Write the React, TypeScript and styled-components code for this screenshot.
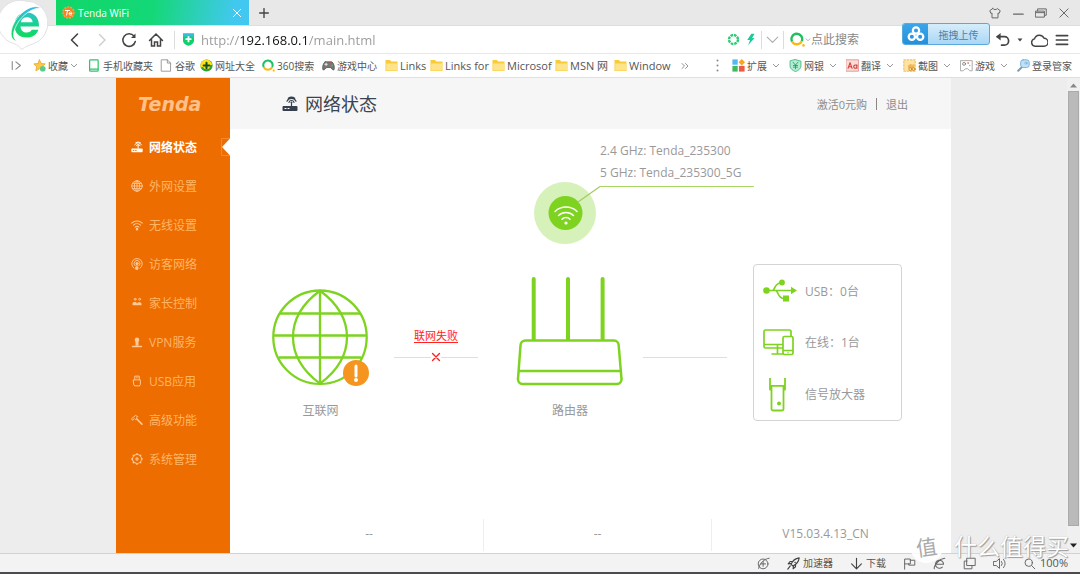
import React from "react";
import styled, { createGlobalStyle } from "styled-components";

const GREEN = "#7ed321";

const GlobalStyle = createGlobalStyle`
  *, *::before, *::after { box-sizing: border-box; }
  body {
    margin: 0;
    font-family: "Open Sans", "Noto Sans CJK SC", sans-serif;
    font-size: 12px;
    color: #999;
    background: #ededed;
  }
  button, input { font-family: inherit; }
  button { margin: 0; padding: 0; border: 0; background: none; color: inherit; cursor: pointer; }
  a { color: inherit; text-decoration: none; }
  ul { list-style: none; margin: 0; padding: 0; }
  svg { display: block; flex: none; }
`;

const Browser = styled.div`
  position: relative;
  min-height: 100vh;
  display: flex;
  flex-direction: column;
  border-bottom: 2px solid #4a4a50;
`;

/* ---------- tab strip ---------- */

const TabStrip = styled.header`
  display: flex;
  align-items: center;
  height: 26px;
  padding-left: 56px;
  background: #e8e8e8;
  border-bottom: 1px solid #dedede;
`;

const Tab = styled.div`
  display: flex;
  align-items: center;
  gap: 3px;
  width: 193px;
  height: 25px;
  padding: 0 7px 0 6px;
  color: #fff;
  background: linear-gradient(100deg, #10d668 0%, #14d877 50%, #42c8f0 92%);
`;

const TabTitle = styled.span`
  flex: 1;
  font-size: 10px;
`;

const NewTab = styled.button`
  display: grid;
  place-items: center;
  width: 30px;
  height: 25px;
`;

const WindowControls = styled.div`
  display: flex;
  align-items: center;
  gap: 11px;
  margin-left: auto;
  padding-right: 10px;
`;

const BrowserBadge = styled.div`
  position: absolute;
  left: 0;
  top: 0;
`;

/* ---------- address row ---------- */

const AddressRow = styled.div`
  display: flex;
  align-items: center;
  height: 28px;
  padding-left: 61px;
  background: #fff;
  border-bottom: 1px solid #e8e8e8;
`;

const NavGroup = styled.div`
  display: flex;
  padding-right: 5px;
`;

const NavButton = styled.button`
  display: grid;
  place-items: center;
  width: 27px;
  height: 26px;
`;

const Divider = styled.span`
  width: 1px;
  height: 18px;
  background: #dcdcdc;
`;

const AddressField = styled.label`
  display: flex;
  align-items: center;
  gap: 7px;
  flex: 1;
  padding-left: 8px;
`;

const AddressInput = styled.input`
  flex: 1;
  min-width: 0;
  height: 24px;
  padding: 0;
  border: 0;
  outline: 0;
  font-size: 13px;
  color: transparent;
  background: linear-gradient(90deg, #999 0 38px, #111 38px 107px, #999 107px);
  -webkit-background-clip: text;
  background-clip: text;
`;

const AddressTools = styled.div`
  display: flex;
  align-items: center;
  gap: 4px;
`;

const SearchField = styled.label`
  display: flex;
  align-items: center;
  gap: 0;
  width: 207px;
  padding-left: 2px;
`;

const SearchInput = styled.input`
  flex: 1;
  min-width: 0;
  padding: 0;
  border: 0;
  outline: 0;
  font-size: 12px;
  background: transparent;
  &::placeholder { color: #888; opacity: 1; }
`;

const UploadButton = styled.button`
  position: absolute;
  top: 23px;
  right: 90px;
  display: flex;
  align-items: center;
  width: 88px;
  height: 22px;
  border: 1px solid #5aa9dc;
  border-radius: 3px;
  overflow: hidden;
  font-size: 10px;
  color: #4c7fa8;
  background: linear-gradient(#d6edfb, #a9d7f5);
  span { flex: 1; }
`;

const UploadIcon = styled.i`
  display: grid;
  place-items: center;
  width: 25px;
  height: 20px;
  background: linear-gradient(#3aa5ea, #2490dc);
`;

const ToolbarEnd = styled.div`
  display: flex;
  align-items: center;
  gap: 7px;
  padding-right: 11px;
`;

/* ---------- bookmarks ---------- */

const BookmarkRow = styled.nav`
  display: flex;
  align-items: center;
  height: 24px;
  padding-left: 9px;
  color: #555;
  background: #fff;
  border-bottom: 1px solid #dfdfdf;
`;

const BookmarkList = styled.ul`
  display: flex;
  flex: 1;
  min-width: 0;
  padding-left: 11px;
`;

const BookmarkItem = styled.li<{ $width: number }>`
  flex: 0 0 ${(p) => p.$width}px;
`;

const Bookmark = styled.a<{ $latin?: boolean }>`
  display: flex;
  align-items: center;
  gap: 2px;
  height: 22px;
  font-size: ${(p) => (p.$latin ? 11 : 10)}px;
  line-height: 16px;
  white-space: nowrap;
`;

const ExtensionList = styled.ul`
  display: flex;
  padding: 0 6px 0 13px;
`;

const Extension = styled.button`
  display: flex;
  align-items: center;
  gap: 2px;
  min-width: 57px;
  height: 22px;
  font-size: 10px;
  color: #555;
  white-space: nowrap;
  svg:last-child:not(:first-child) { margin-left: 3px; }
`;

/* ---------- router page ---------- */

const Viewport = styled.div`
  display: flex;
  flex: 1;
  background: #ededed;
`;

const Page = styled.div`
  display: flex;
  flex: 1;
  max-width: 835px;
  margin: 0 auto;
`;

const Sidebar = styled.aside`
  width: 114px;
  flex: none;
  background: #ed6d00;
`;

const Brand = styled.div`
  height: 49px;
  padding: 14px 0 0 22px;
  font: italic 700 19px/25px "DejaVu Sans", sans-serif;
  color: #ffc08a;
`;

const MenuLink = styled.a<{ $active?: boolean }>`
  display: flex;
  align-items: center;
  gap: 6px;
  height: 39px;
  padding-left: 15px;
  font-size: 12px;
  font-weight: ${(p) => (p.$active ? 700 : 400)};
  color: ${(p) => (p.$active ? "#fff" : "#ffb566")};
  span { flex: 1; }
`;

const Main = styled.main`
  display: flex;
  flex: 1;
  flex-direction: column;
  min-width: 0;
  background: #fff;
`;

const PageHeader = styled.div`
  display: flex;
  align-items: center;
  justify-content: space-between;
  height: 51px;
  padding: 0 43px 0 52px;
  background: #f6f6f6;
`;

const PageTitle = styled.h1`
  display: flex;
  align-items: center;
  gap: 7px;
  margin: 0;
  font-size: 18px;
  line-height: 26px;
  font-weight: 400;
  color: #3a4450;
`;

const AccountLinks = styled.div`
  display: flex;
  align-items: center;
  gap: 9px;
  font-size: 11px;
  color: #8c8c8c;
`;

const AccountDivider = styled.span`
  width: 1px;
  height: 12px;
  background: #888;
`;

const WifiSummary = styled.section`
  display: flex;
  align-items: flex-start;
  padding: 11px 0 0 304px;
`;

const WifiDrawing = styled.svg`
  margin-top: 42px;
`;

const WifiNames = styled.div`
  width: 154px;
  padding-bottom: 2px;
  border-bottom: 1px solid #a6d763;
  line-height: 22px;
  white-space: nowrap;
`;

const Topology = styled.section`
  display: flex;
  align-items: flex-end;
  padding: 20px 49px 0 41px;
`;

const Node = styled.figure`
  display: flex;
  flex-direction: column;
  align-items: center;
  gap: 14px;
  margin: 0;
  figcaption { line-height: 20px; }
`;

const Connection = styled.div<{ $before: number; $after: number }>`
  flex: 1;
  display: flex;
  flex-direction: column;
  align-items: center;
  margin: 0 ${(p) => p.$after}px 53px ${(p) => p.$before}px;
`;

const FailureLink = styled.a`
  font-size: 11px;
  line-height: 20px;
  color: #f22;
  text-decoration: underline;
  text-underline-offset: 2px;
`;

const Wire = styled.div`
  display: flex;
  align-items: center;
  align-self: stretch;
  height: 22px;
  &::before, &::after { content: ""; flex: 1; height: 1px; background: #dedede; }
`;

const DeviceCard = styled.ul`
  display: flex;
  flex-direction: column;
  justify-content: space-around;
  width: 149px;
  height: 157px;
  border: 1px solid #d4d4d4;
  border-radius: 4px;
`;

const DeviceRow = styled.li`
  display: flex;
  align-items: center;
  gap: 8px;
  height: 51px;
  padding-left: 9px;
`;

const DeviceIcon = styled.span`
  display: grid;
  place-items: center start;
  width: 34px;
`;

const PageFooter = styled.footer`
  display: grid;
  grid-template-columns: repeat(3, 1fr);
  margin-top: auto;
  padding: 0 12px 2px 25px;
`;

const FooterCell = styled.div`
  height: 32px;
  line-height: 30px;
  text-align: center;
  & + & { border-left: 1px solid #eee; }
`;

const Scrollbar = styled.div`
  display: flex;
  flex-direction: column;
  align-items: center;
  gap: 3px;
  width: 13px;
  padding: 5px 0;
  background: #f0f0f0;
`;

const ScrollThumb = styled.div`
  flex: 1;
  width: 11px;
  margin-bottom: 14px;
  background: #bababa;
  border: 1px solid #aaa;
`;

/* ---------- status bar ---------- */

const StatusBar = styled.footer`
  display: flex;
  align-items: center;
  justify-content: flex-end;
  gap: 17px;
  height: 19px;
  padding-right: 12px;
  background: #f3f3f3;
  border-top: 1px solid #d2d2d2;
  color: #555;
`;

const StatusButton = styled.button<{ $large?: boolean }>`
  display: flex;
  align-items: center;
  gap: ${(p) => (p.$large ? 4 : 3)}px;
  font-size: ${(p) => (p.$large ? 11 : 10)}px;
  line-height: 16px;
`;

const Watermark = styled.div`
  position: absolute;
  right: 11px;
  bottom: 9px;
  display: flex;
  align-items: center;
  gap: 11px;
  font-size: 23px;
  line-height: 34px;
  color: #fff;
  text-shadow: 1px 1px 1px #999, 0 0 1px #aaa;
  pointer-events: none;
`;

const WatermarkSeal = styled.span`
  display: grid;
  place-items: center;
  width: 33px;
  height: 33px;
  border-radius: 50%;
  background: rgba(255, 255, 255, 0.85);
  color: #aaa;
  font-size: 21px;
  text-shadow: none;
  transform: rotate(-8deg);
`;

/* ---------- icons ---------- */

type IconProps = { size?: number; color?: string; width?: number; children: React.ReactNode };

const Icon = ({ size = 13, color = "#666", width = 1, children }: IconProps) => (
  <svg width={size} height={size} viewBox="0 0 16 16" fill="none" stroke={color} strokeWidth={width} strokeLinecap="round" strokeLinejoin="round" aria-hidden="true">
    {children}
  </svg>
);

const Chevron = ({ size = 8 }: { size?: number }) => (
  <svg width={size} height="6" viewBox="0 0 8 6" fill="none" stroke="#999" aria-hidden="true">
    <path d="M1 1l3 3 3-3" />
  </svg>
);

const RouterIcon = ({ size, color }: { size: number; color: string }) => (
  <Icon size={size} color={color} width={1.2}>
    <rect x="0.5" y="10" width="15" height="5" rx="1" fill={color} stroke="none" />
    <path d="M9.5 10V6.5" />
    <circle cx="9.5" cy="6.3" r="0.9" fill={color} stroke="none" />
    <path d="M7 6.4a2.6 2.6 0 0 1 5 0M5 5.2a5 5 0 0 1 9 0M6.3 2.2a6 6 0 0 1 6.4 0" />
    <path d="M3 12.5h1M6 12.5h1" stroke={color === "#fff" ? "#ed6d00" : "#fff"} />
  </Icon>
);

const FolderIcon = () => (
  <svg width="13" height="13" viewBox="0 0 13 13" aria-hidden="true">
    <path d="M0.5 1h4.5l1.2 1.6h6.3V12H0.5z" fill="#f9cb38" />
    <path d="M1.2 4.5h11.3V11.5H1.2z" fill="#fde48a" />
  </svg>
);

const BrowserLogo = () => (
  <svg width="50" height="51" viewBox="0 0 50 51" aria-label="浏览器">
    <defs>
      <linearGradient id="logoFill" gradientUnits="userSpaceOnUse" x1="0" y1="6" x2="0" y2="41">
        <stop offset="0" stopColor="#3cb9f0" />
        <stop offset="0.45" stopColor="#1ccf9a" />
        <stop offset="1" stopColor="#0edc50" />
      </linearGradient>
    </defs>
    <path d="M25.5 1a22 22 0 0 1 7 43c-4 1.2-7 3-11 5.5-1.5-2.8-4-4.3-7-5.7A22 22 0 0 1 25.5 1z" fill="#fff" stroke="#e2e2e2" />
    <path fillRule="evenodd" fill="url(#logoFill)" d="M39 26.5H20.500c.4 4 2.800 6 6.200 6 2.500 0 4.200-1 5-2.800h6.700c-1.700 5-6 7.800-11.700 7.800-7.600 0-12.200-4.800-12.200-12.300 0-7.400 4.900-12.700 12.200-12.700 7.800 0 12.600 5.300 12.300 14zM32.700 22.300c-.4-3.200-2.600-5-5.700-5-3.200 0-5.500 1.800-6.200 5z" />
    <path fill="url(#logoFill)" stroke="#fff" strokeWidth="0.7" d="M41 8C34 7.500 22 14 16.500 25c-3.500 7-4.500 13 .5 16-6.500-.5-7-7.500-4.500-14.500C17 14.500 31 2.500 41 8z" />
  </svg>
);

const SearchRing = ({ size }: { size: number }) => (
  <svg width={size} height={size} viewBox="0 0 14 14" fill="none" strokeWidth="2.2" aria-hidden="true">
    <path d="M2 9A5 5 0 1 1 11 8.5" stroke="#1fc062" />
    <path d="M2 8.8A5 5 0 0 0 11 8.5" stroke="#ffb60f" />
    <circle cx="12.6" cy="12.5" r="1.2" fill="#ffb60f" />
  </svg>
);

const bookmarks: { label: string; width: number; latin?: boolean; menu?: boolean; icon: React.ReactNode }[] = [
  {
    label: "收藏", width: 55, menu: true,
    icon: (
      <Icon color="#e9a727">
        <path d="M8 1l2 4.5 5 .5-3.7 3.4 1 5L8 12l-4.5 2.5 1-5L1 6l5-.5z" fill="#fcc84a" />
        <circle cx="12" cy="12" r="3.5" fill="#5fc98a" stroke="none" />
      </Icon>
    ),
  },
  { label: "手机收藏夹", width: 72, icon: <Icon color="#2fc468" width={1.5}><rect x="2" y="1" width="10.5" height="14" rx="1" /><path d="M3 12.5h9" /></Icon> },
  { label: "谷歌", width: 40, icon: <Icon color="#888"><path d="M2 1h7l4 4v10H2zM9 1v4h4" /></Icon> },
  {
    label: "网址大全", width: 62,
    icon: (
      <Icon>
        <circle cx="8" cy="8" r="7.5" fill="#2aa339" stroke="none" />
        <path d="M3 2.5A7.5 7.5 0 0 1 15 7L1 10.5A7 7 0 0 1 3 2.5z" fill="#ffe11a" stroke="none" />
        <circle cx="8" cy="8" r="4.5" fill="#ffe11a" stroke="none" />
        <path d="M8 4.5v7M4.5 8h7" stroke="#17501d" strokeWidth="2.5" />
      </Icon>
    ),
  },
  { label: "360搜索", width: 60, icon: <SearchRing size={13} /> },
  {
    label: "游戏中心", width: 63,
    icon: (
      <Icon color="#555">
        <path d="M4 3.5h8c3 1 4 9 2.5 10-2 .7-2.5-3-4.5-3H6c-2 0-2.5 3.7-4.5 3C0 12.5 1 4.500 4 3.5z" fill="#777" />
        <path d="M3.5 6.5h3M5 5v3" stroke="#fff" />
        <circle cx="11" cy="5.5" r="1.4" fill="#e24a3b" stroke="none" />
        <circle cx="12.5" cy="8" r="1.2" fill="#4ebb58" stroke="none" />
      </Icon>
    ),
  },
  { label: "Links", width: 45, latin: true, icon: <FolderIcon /> },
  { label: "Links for", width: 62, latin: true, icon: <FolderIcon /> },
  { label: "Microsof", width: 63, latin: true, icon: <FolderIcon /> },
  { label: "MSN 网", width: 59, latin: true, icon: <FolderIcon /> },
  { label: "Window", width: 67, latin: true, icon: <FolderIcon /> },
];

const extensions: { label: string; menu: boolean; icon: React.ReactNode }[] = [
  {
    label: "扩展", menu: true,
    icon: (
      <Icon>
        <g stroke="none">
          <rect x="0.5" y="0.5" width="6.5" height="6.5" fill="#54b6f2" />
          <path d="M12 0l4 4-4 4-4-4z" fill="#f6a623" />
          <rect x="0.5" y="8.5" width="6.5" height="7" fill="#3cba5c" />
          <rect x="8.5" y="8.5" width="7" height="7" fill="#ee5a45" />
        </g>
      </Icon>
    ),
  },
  { label: "网银", menu: true, icon: <Icon color="#35b27c"><path d="M8 .7l6.7 2v6c0 3-3 5.5-6.7 6.800C4.3 14.2 1.3 11.7 1.3 8.7v-6z" fill="#b4ecd2" /><path d="M5 4l3 3.5L11 4M8 7.5V12M5.5 8h5M5.5 10h5" stroke="#1f9a63" /></Icon> },
  {
    label: "翻译", menu: true,
    icon: <Icon color="#e08983"><rect x="0.5" y="1" width="15" height="14" fill="#fbdcd9" /><path d="M2.5 11.5L5 4.5l2.5 7M3.3 9.5h3.4M13.5 7v4.5M13.5 9.3a2 2 0 1 0 0 .2" stroke="#cf3f36" strokeWidth="1.3" /></Icon>,
  },
  {
    label: "截图", menu: true,
    icon: <Icon color="#f0a93a"><rect x="1" y="1" width="14" height="14" fill="#fde3a5" strokeDasharray="2 2" /><path d="M6 8l3-2 3 1 2-1v5H6z" fill="#f2b755" stroke="none" /><circle cx="9" cy="12.5" r="1.8" stroke="#c8841b" /><circle cx="13" cy="12.5" r="1.8" stroke="#c8841b" /></Icon>,
  },
  {
    label: "游戏", menu: true,
    icon: <Icon color="#999"><path d="M1 2h14v12.5h-3L9.5 12h-3L4 14.5H1z" fill="#fff" /><circle cx="5" cy="6" r="1.8" stroke="#777" /><circle cx="10" cy="5" r="1" fill="#e7503f" stroke="none" /><circle cx="12" cy="8" r="1" fill="#e9b12f" stroke="none" /></Icon>,
  },
  { label: "登录管家", menu: false, icon: <Icon color="#6fa6cf"><path d="M6 10l-4.5 4.5" stroke="#7f9bb2" strokeWidth="2.5" /><rect x="4.5" y="1" width="10.5" height="9.5" rx="3" fill="#bfe2fa" /><circle cx="11" cy="5" r="1.3" fill="#fff" /></Icon> },
];

const PALE = "#ffc894";

const menu: { label: string; active?: boolean; icon: React.ReactNode }[] = [
  { label: "网络状态", active: true, icon: <RouterIcon size={12} color="#fff" /> },
  { label: "外网设置", icon: <Icon size={12} color={PALE} width={1.2}><circle cx="8" cy="8" r="7" /><ellipse cx="8" cy="8" rx="3.5" ry="7" /><path d="M8 1v14M1 8h14M2 4.5h12M2 11.5h12" /></Icon> },
  { label: "无线设置", icon: <Icon size={12} color={PALE} width={1.4}><path d="M1 5.5a10 10 0 0 1 14 0M3.3 8.2a7 7 0 0 1 9.4 0M5.5 10.8a4 4 0 0 1 5 0" /><circle cx="8" cy="13.5" r="1" fill={PALE} /></Icon> },
  { label: "访客网络", icon: <Icon size={12} color={PALE} width={1.3}><path d="M4 13.5a7 7 0 1 1 8 0M5.5 10.5a4 4 0 1 1 5 0" /><circle cx="8" cy="7.5" r="1.5" fill={PALE} /><path d="M8 9v6M6.8 12h2.4v3H6.8z" fill={PALE} /></Icon> },
  { label: "家长控制", icon: <Icon size={12} color={PALE} width={1.2}><circle cx="5.5" cy="3" r="1.3" /><circle cx="11.5" cy="3" r="1.3" /><path d="M2 11V8.5c1-2.5 5-2.5 6 0 1-2 5-2 6 0V11z" fill={PALE} stroke="none" /></Icon> },
  { label: "VPN服务", icon: <Icon size={12} color={PALE}><path d="M8 2a3 3 0 0 1 3 3c0 2-1 2-1 4v4H6V9c0-2-1-2-1-4a3 3 0 0 1 3-3z" fill={PALE} stroke="none" /><path d="M2 14h12" strokeWidth="1.8" /></Icon> },
  { label: "USB应用", icon: <Icon size={12} color={PALE} width={1.3}><path d="M5 6V1.5h6V6M3.5 6.5h9v6a2 2 0 0 1-2 2h-5a2 2 0 0 1-2-2zM7 3.7h.3M9 3.7h.3" /></Icon> },
  { label: "高级功能", icon: <Icon size={12} color={PALE} width={1.3}><path d="M1 6l5-4 3 1.5-1.5 1.5L8 6 6 7.5 4.5 6 2.5 8z" /><path d="M8 7l6.5 6.5" strokeWidth="2.2" /></Icon> },
  { label: "系统管理", icon: <Icon size={12} color={PALE} width={1.4}><circle cx="8" cy="8" r="6" /><circle cx="8" cy="8" r="1.5" /><path d="M8 .8v1M8 14.2v1M.8 8h1M14.2 8h1M3 3l.6.6M12.4 12.4l.6.6M3 13l.6-.6M12.4 3.6L13 3" strokeWidth="1.8" /></Icon> },
];

const UsbIcon = () => (
  <svg width="34" height="23" viewBox="0 0 34 23" fill="none" stroke={GREEN} strokeWidth="1.7" aria-hidden="true">
    <circle cx="3.5" cy="11.5" r="3.3" fill={GREEN} stroke="none" />
    <circle cx="19" cy="3.5" r="2.9" fill={GREEN} stroke="none" />
    <rect x="20" y="16.5" width="6" height="6" fill={GREEN} stroke="none" />
    <path d="M28 7.8l6 3.7-6 3.7z" fill={GREEN} stroke="none" />
    <path d="M3 11.5h26M10 11.5c2-1 1.5-7.5 8-7.5M13 11.5c2.5 1.5 2 8 8 8" />
  </svg>
);

const ScreenIcon = () => (
  <svg width="31" height="27" viewBox="0 0 31 27" fill="none" stroke={GREEN} strokeWidth="1.7" strokeLinejoin="round" aria-hidden="true">
    <path d="M20 19H2.5A1.5 1.5 0 0 1 1 17.5V2.5A1.5 1.5 0 0 1 2.5 1h24A1.5 1.5 0 0 1 28 2.5V7M1 15.500h19M14.5 16v8.5M8.5 25H20" />
    <rect x="20" y="7.5" width="10" height="18" rx="1.5" />
    <path d="M20 21.5h10M24.5 23.5h1" />
  </svg>
);

const ExtenderIcon = () => (
  <svg width="30" height="35" viewBox="-6 0 30 35" fill="none" stroke={GREEN} strokeWidth="1.8" strokeLinejoin="round" aria-hidden="true">
    <path d="M1 1v11.5h1.5M16 1v11.5h-1.5M1 8.8h15M2.5 9v23a1.5 1.5 0 0 0 1.5 1.5h9a1.5 1.5 0 0 0 1.5-1.5V9" />
    <circle cx="10" cy="26.5" r="2" fill={GREEN} stroke="none" />
  </svg>
);

const devices = [
  { label: "USB：0台", icon: <UsbIcon /> },
  { label: "在线：1台", icon: <ScreenIcon /> },
  { label: "信号放大器", icon: <ExtenderIcon /> },
];

export default function App() {
  return (
    <Browser>
      <GlobalStyle />

      <TabStrip>
        <Tab>
          <svg width="13" height="13" viewBox="0 0 13 13" aria-hidden="true">
            <circle cx="6.5" cy="6.5" r="5.5" fill="#f58220" stroke="#f9a04f" strokeWidth="1.5" strokeDasharray="2 1" />
            <path d="M3 4.5h5M5.5 4.5l-1 5M7 7.5h3c0-2-2.5-2-3 0 0 2 2 2 3 1" fill="none" stroke="#fff" />
          </svg>
          <TabTitle>Tenda WiFi</TabTitle>
          <button aria-label="关闭标签页"><Icon size={10} color="#fff" width={1.5}><path d="M2 2l12 12M14 2L2 14" /></Icon></button>
        </Tab>
        <NewTab aria-label="新标签页"><Icon size={10} color="#444" width={2.2}><path d="M8 1v14M1 8h14" /></Icon></NewTab>
        <WindowControls>
          <button aria-label="皮肤"><Icon size={12} width={1.3}><path d="M5 2L1 5l1.5 3.5L4 8v6.5h8V8l1.5.5L15 5l-4-3c-1 2-5 2-6 0z" /></Icon></button>
          <button aria-label="最小化"><Icon size={12} width={1.4}><path d="M2 9.5h13" /></Icon></button>
          <button aria-label="还原"><Icon size={12} width={1.3}><path d="M1 5.5h11.5v8H1zM3.5 5V2.5H15v8.5h-2M1 7.5h11" /></Icon></button>
          <button aria-label="关闭"><Icon size={12} width={1.3}><path d="M2.5 2.5l11 11M13.5 2.5l-11 11" /></Icon></button>
        </WindowControls>
      </TabStrip>

      <AddressRow>
        <NavGroup>
          <NavButton aria-label="后退"><Icon size={16} color="#444" width={1.6}><path d="M10.5 2L4.5 8l6 6" /></Icon></NavButton>
          <NavButton aria-label="前进"><Icon size={16} color="#ccc" width={1.4}><path d="M5.5 2.5L11 8l-5.5 5.5" /></Icon></NavButton>
          <NavButton aria-label="刷新"><Icon size={16} color="#444" width={1.5}><path d="M13 4A6.3 6.3 0 1 0 14.3 9.5" /><path d="M14.5 1.5v4.5H10z" fill="#444" stroke="none" /></Icon></NavButton>
          <NavButton aria-label="主页"><Icon size={16} color="#444" width={1.5}><path d="M1.5 8.5L8 2l6.5 6.5M3.5 7.5V14h3v-4h3v4h3V7.5" strokeLinejoin="miter" /></Icon></NavButton>
        </NavGroup>
        <Divider />
        <AddressField>
          <svg width="11" height="13" viewBox="0 0 11 13" aria-hidden="true">
            <path d="M0 .5h11v7c0 2.8-2.5 4.3-5.5 5.3C2.5 11.8 0 10.3 0 7.5z" fill="#12ce6c" />
            <path d="M0 .5h11v3H0z" fill="#35bde0" />
            <path d="M5.5 3.2v6M2.5 6.2h6" stroke="#fff" strokeWidth="1.8" />
          </svg>
          <AddressInput aria-label="地址" defaultValue="http://192.168.0.1/main.html" />
        </AddressField>
        <AddressTools>
          <button aria-label="极速模式"><Icon color="#28cc72"><circle cx="8" cy="8" r="5.5" strokeWidth="3" strokeDasharray="3.2 1.1" strokeLinecap="butt" /></Icon></button>
          <button aria-label="加速"><Icon color="#1dc997"><path d="M9 1h4l-3 5h3L5 15l2.5-6.5H4z" fill="#1dc997" stroke="none" /></Icon></button>
          <Divider />
          <button aria-label="历史地址"><Icon color="#aaa" width={1.3}><path d="M1.5 5L8 11.5 14.5 5" /></Icon></button>
          <Divider />
          <SearchField>
            <SearchRing size={15} />
            <Chevron size={6} />
            <SearchInput aria-label="搜索" placeholder="点此搜索" />
          </SearchField>
        </AddressTools>
        <ToolbarEnd>
          <button aria-label="撤销"><Icon size={15} color="#444" width={1.8}><path d="M2.5 5H10a4.5 4.5 0 0 1 0 9H7" /><path d="M6 1L1 5l5 4z" fill="#444" stroke="none" /></Icon></button>
          <svg width="6" height="4" viewBox="0 0 6 4" aria-hidden="true"><path d="M0.5 0.5h5L3 3.5z" fill="#444" /></svg>
          <button aria-label="云同步"><Icon size={18} color="#444" width={1.3}><path d="M4.5 13.5a3.3 3.3 0 0 1-.5-6.5 4.5 4.5 0 0 1 8.5-.5 3.5 3.5 0 0 1 0 7z" /></Icon></button>
          <button aria-label="菜单"><Icon size={14} color="#444" width={1.8}><path d="M1.5 3h13M1.5 8h13M1.5 13h13" /></Icon></button>
        </ToolbarEnd>
      </AddressRow>

      <BookmarkRow aria-label="收藏栏">
        <Icon size={13} color="#888" width={1.3}><path d="M4 3v10M8.5 3.5L14 8l-5.5 4.5" /></Icon>
        <BookmarkList>
          {bookmarks.map((b) => (
            <BookmarkItem key={b.label} $width={b.width}>
              <Bookmark href="#" $latin={b.latin}>
                {b.icon}
                <span>{b.label}</span>
                {b.menu && <Chevron />}
              </Bookmark>
            </BookmarkItem>
          ))}
          <li><Bookmark as="button" aria-label="更多收藏"><Icon size={8} color="#777" width={1.6}><path d="M2 3l5 5-5 5M9 3l5 5-5 5" /></Icon></Bookmark></li>
        </BookmarkList>
        <svg width="3" height="13" viewBox="0 0 3 13" fill="#888" aria-hidden="true"><circle cx="1.5" cy="1.5" r="1" /><circle cx="1.5" cy="6.5" r="1" /><circle cx="1.5" cy="11.5" r="1" /></svg>
        <ExtensionList>
          {extensions.map((e) => (
            <li key={e.label}>
              <Extension>
                {e.icon}
                <span>{e.label}</span>
                {e.menu && <Chevron />}
              </Extension>
            </li>
          ))}
        </ExtensionList>
      </BookmarkRow>

      <Viewport>
        <Page>
          <Sidebar>
            <Brand>Tenda</Brand>
            <nav>
              <ul>
                {menu.map((m) => (
                  <li key={m.label}>
                    <MenuLink href="#" $active={m.active}>
                      {m.icon}
                      <span>{m.label}</span>
                      {m.active && (
                        <svg width="9" height="18" viewBox="0 0 9 18" aria-hidden="true">
                          <path d="M9 0.5H0.5v17H9" fill="none" stroke="#f28a35" />
                          <path d="M9 0.5v17L1 9z" fill="#fff" />
                        </svg>
                      )}
                    </MenuLink>
                  </li>
                ))}
              </ul>
            </nav>
          </Sidebar>

          <Main>
            <PageHeader>
              <PageTitle><RouterIcon size={16} color="#36404c" />网络状态</PageTitle>
              <AccountLinks>
                <a href="#">激活0元购</a>
                <AccountDivider />
                <a href="#">退出</a>
              </AccountLinks>
            </PageHeader>

            <WifiSummary>
              <WifiDrawing width="66" height="62" viewBox="0 0 66 62" aria-hidden="true">
                <circle cx="31" cy="31" r="31" fill="#d7f1bb" />
                <circle cx="31.5" cy="31" r="17" fill={GREEN} />
                <path d="M44 20L66 4.5" stroke="#a6c963" strokeWidth="1.2" />
                <g fill="none" stroke="#fff" strokeWidth="1.5" strokeLinecap="round">
                  <path d="M21 29.5a16 16 0 0 1 22 0M24.5 33.5a11 11 0 0 1 15 0M28 37.3a5.5 5.5 0 0 1 8 0" />
                </g>
                <circle cx="32" cy="41" r="1.6" fill="#fff" />
              </WifiDrawing>
              <WifiNames>
                <div>2.4 GHz: Tenda_235300</div>
                <div>5 GHz: Tenda_235300_5G</div>
              </WifiNames>
            </WifiSummary>

            <Topology>
              <Node>
                <svg width="99" height="98" viewBox="0 0 99 98" fill="none" stroke={GREEN} strokeWidth="2.3" aria-hidden="true">
                  <circle cx="49" cy="48.2" r="46.7" />
                  <path d="M49 1.8v93.4M2 46.5h94M9 24.5h80M8 68.5h82" />
                  <path d="M49 1.7C13 28 13 68 49 94.7M49 1.7C85 28 85 68 49 94.7" />
                  <circle cx="85" cy="84" r="13" fill="#f5951f" stroke="none" />
                  <path d="M85 77v10" stroke="#fff" strokeWidth="3" strokeLinecap="round" />
                  <circle cx="85" cy="91" r="2" fill="#fff" stroke="none" />
                </svg>
                <figcaption>互联网</figcaption>
              </Node>

              <Connection $before={24} $after={38}>
                <FailureLink href="#">联网失败</FailureLink>
                <Wire><Icon size={10} color="#f22" width={2.2}><path d="M2.5 2.5l11 11M13.5 2.5l-11 11" /></Icon></Wire>
              </Connection>

              <Node>
                <svg width="108" height="111" viewBox="0 0 108 111" fill="none" stroke={GREEN} strokeWidth="2.5" strokeLinejoin="round" aria-hidden="true">
                  <path d="M17.7 3v61M52 3v61M86.6 3v61" strokeWidth="4" strokeLinecap="round" />
                  <path d="M10 64.5h88a5 5 0 0 1 4.7 5L105.5 103a4.5 4.5 0 0 1-4.5 5H6.5a4.5 4.5 0 0 1-4.5-5L4.5 69.5a5 5 0 0 1 5-5z" fill="#fff" />
                  <path d="M3 95h102" />
                </svg>
                <figcaption>路由器</figcaption>
              </Node>

              <Connection $before={19} $after={26}>
                <Wire />
              </Connection>

              <DeviceCard>
                {devices.map((d) => (
                  <DeviceRow key={d.label}>
                    <DeviceIcon>{d.icon}</DeviceIcon>
                    {d.label}
                  </DeviceRow>
                ))}
              </DeviceCard>
            </Topology>

            <PageFooter>
              <FooterCell>--</FooterCell>
              <FooterCell>--</FooterCell>
              <FooterCell>V15.03.4.13_CN</FooterCell>
            </PageFooter>
          </Main>
        </Page>

        <Scrollbar aria-hidden="true">
          <svg width="7" height="5" viewBox="0 0 7 5"><path d="M3.5 0.5L7 4.5H0z" fill="#888" /></svg>
          <ScrollThumb />
          <svg width="7" height="5" viewBox="0 0 7 5"><path d="M3.5 4.5L7 .5H0z" fill="#222" /></svg>
        </Scrollbar>
      </Viewport>

      <StatusBar>
        <StatusButton aria-label="浏览医生"><Icon width={1.2}><circle cx="7.5" cy="8.5" r="6" /><path d="M7.5 5.5v6M4.5 8.5h6M2 14C3 8 9 2 15 1.5" /></Icon></StatusButton>
        <StatusButton><Icon color="#444" width={1.4}><path d="M5 9C7 4 11 1.5 15 1c-.5 4-3 8-8 10zM5 8L1.5 8.5 4 5.5h3M8 11l-.5 3.5 3-2.5V9M4 11l-3 4M9.5 6.5h1" /></Icon>加速器</StatusButton>
        <StatusButton><Icon color="#444" width={1.4}><path d="M8 1.5v13M2 8.5l6 6 6-6" /></Icon>下载</StatusButton>
        <StatusButton aria-label="标记"><Icon width={1.2}><path d="M2 15V2.5h7v6H2M9 4h5.5v6H7V8.5" /></Icon></StatusButton>
        <StatusButton aria-label="内核模式"><Icon width={1.3}><path d="M3 9h10a5 5 0 1 0-1.5 3.5M1.5 14.5C1 10 8 2 14.5 1.5" /></Icon></StatusButton>
        <StatusButton aria-label="窗口"><Icon width={1.2}><path d="M5 1.5h10v9H5zM5 5H1.5v9.5H11v-4" /></Icon></StatusButton>
        <StatusButton aria-label="静音"><Icon width={1.2}><path d="M1 5.5h3L8 2v12l-4-3.5H1zM10.5 5.5a4 4 0 0 1 0 5M13 3a8 8 0 0 1 0 10" /></Icon></StatusButton>
        <StatusButton $large><Icon width={1.2}><circle cx="7" cy="7" r="4.5" /><path d="M10.5 10.5l4 4" /></Icon>100%</StatusButton>
      </StatusBar>

      <BrowserBadge><BrowserLogo /></BrowserBadge>
      <UploadButton>
        <UploadIcon>
          <Icon size={18} color="#fff" width={2}><circle cx="8" cy="4.8" r="2.8" /><circle cx="4.3" cy="10.5" r="2.8" /><circle cx="11.7" cy="10.5" r="2.8" /></Icon>
        </UploadIcon>
        <span>拖拽上传</span>
      </UploadButton>
      <Watermark><WatermarkSeal>值</WatermarkSeal>什么值得买</Watermark>
    </Browser>
  );
}
